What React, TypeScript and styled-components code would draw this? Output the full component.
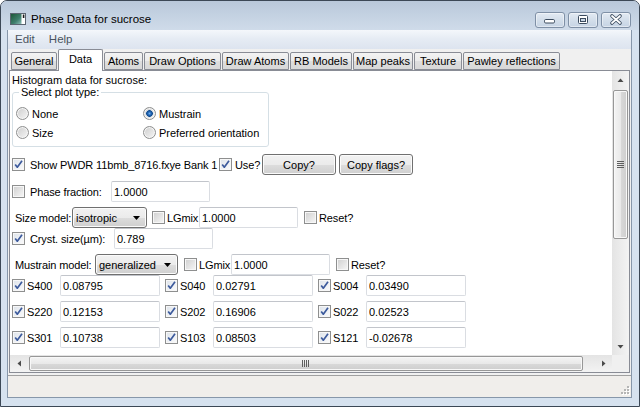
import React from "react";
import styled, { createGlobalStyle } from "styled-components";

const GlobalStyle = createGlobalStyle`
  html, body { margin: 0; padding: 0; background: #ffffff; }
  body { font-family: "Liberation Sans", Arial, sans-serif; font-size: 11px; color: #000; }
  *, *::before, *::after { box-sizing: border-box; }
`;

const Window = styled.div`
  width: 640px;
  height: 407px;
  display: flex;
  flex-direction: column;
  border: 1px solid #3c4856;
  border-radius: 7px 7px 0 0;
  background: #d6e2ef;
  overflow: hidden;
`;

const TitleBar = styled.div`
  height: 29px;
  flex: none;
  display: flex;
  align-items: flex-start;
  padding: 10px 8px 0 9px;
  background: linear-gradient(to bottom, #b9c8da 0%, #c4d2e2 50%, #cfdbe9 100%);
`;

const AppIcon = styled.svg`
  flex: none;
  display: block;
`;

const Title = styled.div`
  margin-left: 5px;
  font-size: 11.5px;
  line-height: 17px;
  color: #000;
  flex: 1;
`;

const CaptionButtons = styled.div`
  display: flex;
  gap: 3px;
  margin-top: 1px;
`;

const CaptionButton = styled.div`
  width: 30px;
  height: 16px;
  border: 1px solid #7f90a6;
  border-radius: 3px;
  background: linear-gradient(to bottom, #e3eaf3 0%, #d3deea 50%, #c6d4e4 100%);
  box-shadow: inset 0 0 0 1px rgba(255, 255, 255, 0.45);
  display: flex;
  svg { display: block; margin: -1px; }
`;

const FrameBody = styled.div`
  flex: 1;
  display: flex;
  flex-direction: column;
  padding: 0 7px 8px 6px;
  min-height: 0;
`;

const Client = styled.div`
  flex: 1;
  display: flex;
  flex-direction: column;
  border: 1px solid #8797aa;
  border-top: none;
  background: #f0f0f0;
  min-height: 0;
`;

const MenuBar = styled.div`
  height: 19px;
  flex: none;
  display: flex;
  background: linear-gradient(to bottom, #f4f7fb 0%, #e6ecf4 45%, #dde4ef 100%);
`;

const MenuItem = styled.div`
  padding: 0 7px;
  line-height: 19px;
  font-size: 11.5px;
  color: #4a5460;
`;

const Notebook = styled.div`
  flex: none;
  display: flex;
  flex-direction: column;
  padding: 0 1px;
`;

const TabStrip = styled.div`
  height: 21px;
  display: flex;
  align-items: flex-end;
  gap: 1px;
  padding-left: 2px;
`;

const Tab = styled.div<{ $w: number; $active?: boolean }>`
  width: ${(p) => p.$w}px;
  height: ${(p) => (p.$active ? 22 : 18)}px;
  margin-bottom: ${(p) => (p.$active ? -1 : 0)}px;
  position: relative;
  z-index: ${(p) => (p.$active ? 1 : 0)};
  border: 1px solid #898c95;
  border-bottom: ${(p) => (p.$active ? "none" : "1px solid #898c95")};
  border-radius: 2px 2px 0 0;
  background: ${(p) =>
    p.$active ? "#ffffff" : "linear-gradient(to bottom, #f3f3f3 0%, #ebebeb 50%, #dedede 51%, #d8d8d8 100%)"};
  display: flex;
  align-items: ${(p) => (p.$active ? "flex-start" : "center")};
  padding-top: ${(p) => (p.$active ? 3 : 0)}px;
  justify-content: center;
  white-space: nowrap;
  color: #000;
`;

const Page = styled.div`
  height: 303px;
  border: 1px solid #898c95;
  background: #ffffff;
  display: flex;
  flex-direction: column;
`;

const PageUpper = styled.div`
  flex: 1;
  display: flex;
  min-height: 0;
`;

const Content = styled.div`
  flex: 1;
  overflow: hidden;
  padding: 2px 0 0 2px;
  display: flex;
  flex-direction: column;
  white-space: nowrap;
`;

const Header = styled.div`
  line-height: 14px;
`;

const GroupBox = styled.div`
  margin-top: 5px;
  width: 257px;
  height: 55px;
  border: 1px solid #d5dfe5;
  border-radius: 3px;
  display: flex;
  flex-direction: column;
`;

const Legend = styled.div`
  margin: -7px 0 0 6px;
  padding: 0 2px;
  width: fit-content;
  background: #ffffff;
  line-height: 13px;
`;

const RadioGrid = styled.div`
  margin-top: 5px;
  padding-left: 3px;
  display: grid;
  grid-template-columns: 127px auto;
  grid-auto-rows: 19px;
`;

const RadioItem = styled.div`
  display: flex;
  align-items: center;
  gap: 3px;
`;

const RadioDot = styled.span<{ $on?: boolean }>`
  flex: none;
  width: 13px;
  height: 13px;
  border-radius: 50%;
  border: 1px solid #8e8f8f;
  box-shadow: inset 0 0 0 1px #f6f6f6;
  background: ${(p) =>
    p.$on
      ? "radial-gradient(circle at 50% 50%, #6fb0ee 0, #2569b8 1.6px, #0f4a8e 3px, #c9d3dd 3.6px, rgba(0,0,0,0) 4.2px), linear-gradient(135deg, #cfcfcf, #f6f6f6)"
      : "linear-gradient(135deg, #cdcdcd, #f6f6f6)"};
`;

const Row = styled.div<{ $mt?: number; $pl?: number }>`
  height: 21px;
  margin-top: ${(p) => p.$mt ?? 0}px;
  padding-left: ${(p) => p.$pl ?? 0}px;
  display: flex;
  align-items: center;
`;

const CheckLabel = styled.div<{ $gap?: number; $w?: number; $ml?: number }>`
  display: flex;
  align-items: center;
  gap: ${(p) => p.$gap ?? 5}px;
  margin-left: ${(p) => p.$ml ?? 0}px;
  ${(p) => (p.$w ? `width: ${p.$w}px;` : "")}
  flex: none;
`;

const CheckBox = styled.span<{ $checked?: boolean }>`
  flex: none;
  width: 13px;
  height: 13px;
  border: 1px solid #8e8f8f;
  box-shadow: inset 0 0 0 1px #f7f7f7;
  background: ${(p) =>
    p.$checked ? "linear-gradient(135deg, #dde3ea, #fbfbfc)" : "linear-gradient(135deg, #cfcfcf, #f7f7f7)"};
  display: flex;
  svg { display: block; }
`;

const Label = styled.span<{ $w?: number }>`
  flex: none;
  letter-spacing: -0.12px;
  ${(p) => (p.$w ? `width: ${p.$w}px;` : "")}
`;

const TextField = styled.input<{ $w: number }>`
  width: ${(p) => p.$w}px;
  height: 21px;
  flex: none;
  margin: 0;
  padding: 0 2px;
  border: 1px solid #dadde2;
  border-top-color: #c2c5cb;
  border-radius: 2px;
  background: #ffffff;
  font-family: inherit;
  font-size: 11px;
  color: #000;
  outline: none;
`;

const PushButton = styled.div<{ $w: number; $ml?: number }>`
  width: ${(p) => p.$w}px;
  height: 21px;
  margin-left: ${(p) => p.$ml ?? 0}px;
  flex: none;
  border: 1px solid #707070;
  border-radius: 3px;
  background: linear-gradient(to bottom, #f2f2f2 0%, #ebebeb 50%, #dddddd 51%, #cfcfcf 100%);
  box-shadow: inset 0 0 0 1px #fbfbfb;
  display: flex;
  align-items: center;
  justify-content: center;
`;

const Combo = styled.div<{ $w: number }>`
  width: ${(p) => p.$w}px;
  height: 21px;
  flex: none;
  border: 1px solid #707070;
  border-radius: 3px;
  background: linear-gradient(to bottom, #f2f2f2 0%, #ebebeb 50%, #dddddd 51%, #cfcfcf 100%);
  box-shadow: inset 0 0 0 1px #fbfbfb;
  display: flex;
  align-items: center;
  justify-content: space-between;
  padding: 0 6px 0 3px;
  svg { display: block; }
`;

const SGrid = styled.div`
  display: grid;
  grid-template-columns: repeat(3, 153px);
  grid-auto-rows: 21px;
  row-gap: 5px;
`;

const SCell = styled.div`
  display: flex;
  align-items: center;
`;

const VScroll = styled.div`
  width: 17px;
  flex: none;
  display: flex;
  flex-direction: column;
  background: linear-gradient(to right, #e4e4e4, #f3f3f3);
`;

const ScrollArrow = styled.div`
  width: 17px;
  height: 17px;
  flex: none;
  display: flex;
  align-items: center;
  justify-content: center;
  svg { display: block; }
`;

const VTrack = styled.div`
  flex: 1;
  padding: 2px 1px 0 1px;
`;

const VThumb = styled.div<{ $h: number }>`
  height: ${(p) => p.$h}px;
  border: 1px solid #979797;
  border-radius: 2px;
  background: linear-gradient(to right, #f4f4f4 0%, #e9e9e9 50%, #d9d9d9 51%, #cecece 100%);
  box-shadow: inset 0 0 0 1px #f8f8f8;
  display: flex;
  align-items: center;
  justify-content: center;
`;

const HScrollRow = styled.div`
  height: 17px;
  flex: none;
  display: flex;
`;

const HScroll = styled.div`
  flex: 1;
  display: flex;
  background: linear-gradient(to bottom, #e4e4e4, #f3f3f3);
`;

const HTrack = styled.div`
  flex: 1;
  padding: 1px 0 1px 2px;
`;

const HThumb = styled.div<{ $w: number }>`
  width: ${(p) => p.$w}px;
  height: 100%;
  border: 1px solid #979797;
  border-radius: 2px;
  background: linear-gradient(to bottom, #f4f4f4 0%, #e9e9e9 50%, #d9d9d9 51%, #cecece 100%);
  box-shadow: inset 0 0 0 1px #f8f8f8;
  display: flex;
  align-items: center;
  justify-content: center;
`;

const Corner = styled.div`
  width: 17px;
  flex: none;
  background: #f0f0f0;
`;

const StatusBar = styled.div`
  margin-top: 2px;
  flex: 1;
  border-top: 1px solid #a0a0a0;
  background: #f0eeeb;
  display: flex;
  justify-content: flex-end;
  align-items: flex-end;
  padding: 0 1px 2px 0;
  svg { display: block; }
`;

const tabs = [
  { label: "General", w: 46 },
  { label: "Data", w: 45, active: true },
  { label: "Atoms", w: 39 },
  { label: "Draw Options", w: 77 },
  { label: "Draw Atoms", w: 67 },
  { label: "RB Models", w: 62 },
  { label: "Map peaks", w: 60 },
  { label: "Texture", w: 48 },
  { label: "Pawley reflections", w: 97 },
];

const sTerms = [
  ["S400", "0.08795"],
  ["S040", "0.02791"],
  ["S004", "0.03490"],
  ["S220", "0.12153"],
  ["S202", "0.16906"],
  ["S022", "0.02523"],
  ["S301", "0.10738"],
  ["S103", "0.08503"],
  ["S121", "-0.02678"],
];

const Check = ({ checked }: { checked?: boolean }) => (
  <CheckBox $checked={checked}>
    {checked && (
      <svg width="11" height="11" viewBox="0 0 11 11">
        <path d="M2.2 5.4 L4.3 8.2 L9 1.8" fill="none" stroke="#3c5a9c" strokeWidth="1.7" strokeLinejoin="round" />
      </svg>
    )}
  </CheckBox>
);

const DownArrow = () => (
  <svg width="7" height="4" viewBox="0 0 7 4">
    <path d="M0 0 H7 L3.5 4 Z" fill="#000" />
  </svg>
);

const Arrow = ({ dir }: { dir: "up" | "down" | "left" | "right" }) => {
  const d =
    dir === "up"
      ? "M0.5 4 L3.5 0.5 L6.5 4 Z"
      : dir === "down"
      ? "M0.5 0 L3.5 3.5 L6.5 0 Z"
      : dir === "left"
      ? "M4 0.5 L0.5 3.5 L4 6.5 Z"
      : "M0 0.5 L3.5 3.5 L0 6.5 Z";
  const vert = dir === "up" || dir === "down";
  return (
    <svg width={vert ? 7 : 4} height={vert ? 4 : 7} viewBox={vert ? "0 0 7 4" : "0 0 4 7"}>
      <path d={d} fill="#4a4a4a" />
    </svg>
  );
};

export default function App() {
  return (
    <>
      <GlobalStyle />
      <Window>
        <TitleBar>
          <AppIcon width="16" height="16" viewBox="0 0 16 16">
            <defs>
              <linearGradient id="icg" x1="0" y1="0" x2="1" y2="1">
                <stop offset="0" stopColor="#1d5638" />
                <stop offset="0.6" stopColor="#3f7f6e" />
                <stop offset="1" stopColor="#8dbdb8" />
              </linearGradient>
            </defs>
            <rect x="0.5" y="2.5" width="15" height="11" fill="#ffffff" stroke="#5a6470" />
            <rect x="1" y="3" width="10.5" height="10" fill="url(#icg)" />
            <rect x="12.8" y="3.5" width="1.6" height="3.5" fill="#1a1a1a" />
          </AppIcon>
          <Title>Phase Data for sucrose</Title>
          <CaptionButtons>
            <CaptionButton>
              <svg width="30" height="16" viewBox="0 0 30 16">
                <rect x="9.5" y="7.5" width="10" height="3.5" rx="1.2" fill="#ffffff" stroke="#3b4b5e" />
              </svg>
            </CaptionButton>
            <CaptionButton>
              <svg width="30" height="16" viewBox="0 0 30 16">
                <rect x="10.5" y="3.5" width="9" height="8" rx="1" fill="#ffffff" stroke="#3b4b5e" />
                <rect x="12.5" y="6.5" width="5" height="3" fill="#c9d6e5" stroke="#3b4b5e" />
              </svg>
            </CaptionButton>
            <CaptionButton>
              <svg width="30" height="16" viewBox="0 0 30 16">
                <path d="M11 4 L19 11 M19 4 L11 11" stroke="#3b4b5e" strokeWidth="3.6" strokeLinecap="round" />
                <path d="M11 4 L19 11 M19 4 L11 11" stroke="#ffffff" strokeWidth="1.8" strokeLinecap="round" />
              </svg>
            </CaptionButton>
          </CaptionButtons>
        </TitleBar>
        <FrameBody>
          <Client>
            <MenuBar>
              <MenuItem>Edit</MenuItem>
              <MenuItem>Help</MenuItem>
            </MenuBar>
            <Notebook>
              <TabStrip>
                {tabs.map((t) => (
                  <Tab key={t.label} $w={t.w} $active={t.active}>
                    {t.label}
                  </Tab>
                ))}
              </TabStrip>
              <Page>
                <PageUpper>
                  <Content>
                    <Header>Histogram data for sucrose:</Header>
                    <GroupBox>
                      <Legend>Select plot type:</Legend>
                      <RadioGrid>
                        <RadioItem>
                          <RadioDot />
                          None
                        </RadioItem>
                        <RadioItem>
                          <RadioDot $on />
                          Mustrain
                        </RadioItem>
                        <RadioItem>
                          <RadioDot />
                          Size
                        </RadioItem>
                        <RadioItem>
                          <RadioDot />
                          Preferred orientation
                        </RadioItem>
                      </RadioGrid>
                    </GroupBox>

                    <Row $mt={7}>
                      <CheckLabel $gap={5} $w={207}>
                        <Check checked />
                        <Label>Show PWDR 11bmb_8716.fxye Bank 1</Label>
                      </CheckLabel>
                      <CheckLabel $gap={3} $w={43}>
                        <Check checked />
                        <Label>Use?</Label>
                      </CheckLabel>
                      <PushButton $w={74}>Copy?</PushButton>
                      <PushButton $w={74} $ml={3}>
                        Copy flags?
                      </PushButton>
                    </Row>

                    <Row $mt={6}>
                      <CheckLabel $gap={5} $w={99}>
                        <Check />
                        <Label>Phase fraction:</Label>
                      </CheckLabel>
                      <TextField $w={99} defaultValue="1.0000" />
                    </Row>

                    <Row $mt={5} $pl={3}>
                      <Label $w={57}>Size model:</Label>
                      <Combo $w={75}>
                        <span>isotropic</span>
                        <DownArrow />
                      </Combo>
                      <CheckLabel $gap={2} $w={47} $ml={5}>
                        <Check />
                        <Label>LGmix</Label>
                      </CheckLabel>
                      <TextField $w={99} defaultValue="1.0000" />
                      <CheckLabel $gap={2} $ml={6}>
                        <Check />
                        <Label>Reset?</Label>
                      </CheckLabel>
                    </Row>

                    <Row>
                      <CheckLabel $gap={5} $w={102}>
                        <Check checked />
                        <Label>Cryst. size(µm):</Label>
                      </CheckLabel>
                      <TextField $w={99} defaultValue="0.789" />
                    </Row>

                    <Row $mt={5} $pl={3}>
                      <Label $w={80}>Mustrain model:</Label>
                      <Combo $w={83}>
                        <span>generalized</span>
                        <DownArrow />
                      </Combo>
                      <CheckLabel $gap={2} $w={47} $ml={6}>
                        <Check />
                        <Label>LGmix</Label>
                      </CheckLabel>
                      <TextField $w={99} defaultValue="1.0000" />
                      <CheckLabel $gap={2} $ml={6}>
                        <Check />
                        <Label>Reset?</Label>
                      </CheckLabel>
                    </Row>

                    <SGrid>
                      {sTerms.map(([name, val]) => (
                        <SCell key={name}>
                          <CheckLabel $gap={2} $w={48}>
                            <Check checked />
                            <Label>{name}</Label>
                          </CheckLabel>
                          <TextField $w={100} defaultValue={val} />
                        </SCell>
                      ))}
                    </SGrid>
                  </Content>
                  <VScroll>
                    <ScrollArrow>
                      <Arrow dir="up" />
                    </ScrollArrow>
                    <VTrack>
                      <VThumb $h={149}>
                        <svg width="7" height="8" viewBox="0 0 7 8">
                          {[0, 2, 4, 6].map((y) => (
                            <rect key={y} x="0" y={y} width="7" height="1" fill="#5e5e5e" />
                          ))}
                        </svg>
                      </VThumb>
                    </VTrack>
                    <ScrollArrow>
                      <Arrow dir="down" />
                    </ScrollArrow>
                  </VScroll>
                </PageUpper>
                <HScrollRow>
                  <HScroll>
                    <ScrollArrow>
                      <Arrow dir="left" />
                    </ScrollArrow>
                    <HTrack>
                      <HThumb $w={554}>
                        <svg width="8" height="7" viewBox="0 0 8 7">
                          {[0, 2, 4, 6].map((x) => (
                            <rect key={x} x={x} y="0" width="1" height="7" fill="#5e5e5e" />
                          ))}
                        </svg>
                      </HThumb>
                    </HTrack>
                    <ScrollArrow>
                      <Arrow dir="right" />
                    </ScrollArrow>
                  </HScroll>
                  <Corner />
                </HScrollRow>
              </Page>
            </Notebook>
            <StatusBar>
              <svg width="10" height="10" viewBox="0 0 10 10">
                {[
                  [7, 1],
                  [4, 4],
                  [7, 4],
                  [1, 7],
                  [4, 7],
                  [7, 7],
                ].map(([x, y]) => (
                  <g key={`${x}-${y}`}>
                    <rect x={x + 1} y={y + 1} width="2" height="2" fill="#ffffff" />
                    <rect x={x} y={y} width="2" height="2" fill="#b5b5b5" />
                  </g>
                ))}
              </svg>
            </StatusBar>
          </Client>
        </FrameBody>
      </Window>
    </>
  );
}
